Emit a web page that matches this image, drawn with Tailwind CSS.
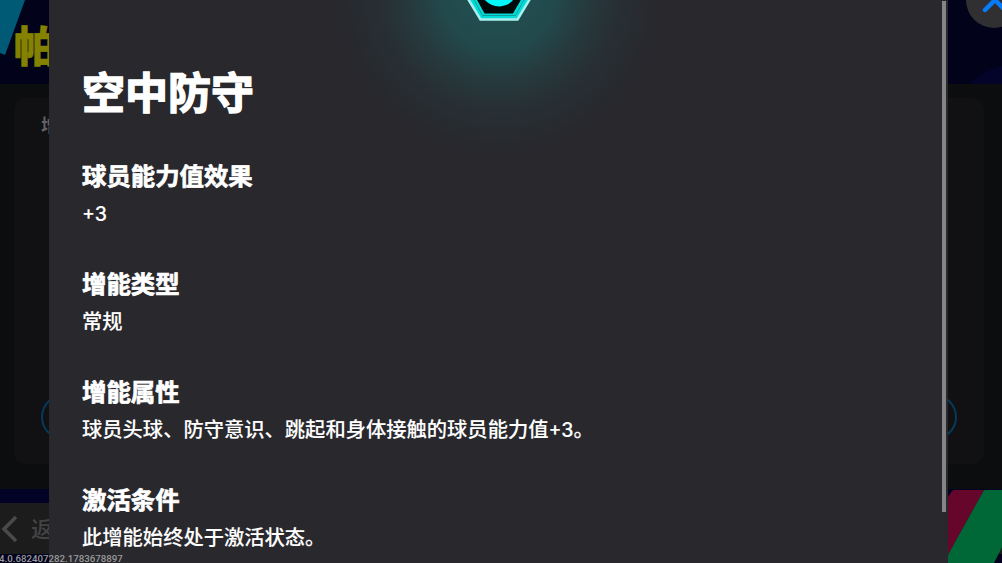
<!DOCTYPE html>
<html lang="zh-CN">
<head>
    <meta charset="UTF-8">
    <meta name="viewport" content="width=device-width, initial-scale=1.0">
    <title>空中防守</title>
    <script src="https://cdn.jsdelivr.net/npm/@tailwindcss/browser@4"></script>
</head>
<body class="relative w-[1002px] h-[563px] overflow-hidden bg-[#02021e] font-['Noto_Sans_CJK_SC',sans-serif] text-white">

    <!-- dimmed page -->
    <div class="flex flex-col h-full whitespace-nowrap">
        <header class="relative h-[84px] shrink-0 bg-[#02021b] overflow-hidden">
            <svg class="absolute inset-0" width="1002" height="84" viewBox="0 0 1002 84">
                <path d="M0 0H25L5 55L0 53Z" fill="#005a75"/>
                <path d="M970 84Q985 70 1002 66V84Z" fill="#04042a"/>
            </svg>
            <h1 class="relative pl-[14px] pt-[19px] text-[42px] leading-[50px] font-black text-[#858200] [-webkit-text-stroke:0.6px_#858200]">帕</h1>
        </header>
        <main class="h-[405px] shrink-0 bg-[#0c0d0f] px-[14px] pt-[14px]">
            <div class="flex flex-col justify-between w-[970px] h-[366px] rounded-[12px] bg-[#111113] px-[27px] pt-[14px] pb-[24px]">
                <div class="text-[18px] leading-[24px] font-bold text-[#626264]">增</div>
                <div class="h-[46px] w-[916px] rounded-full border-2 border-[#063a5c]"></div>
            </div>
        </main>
        <div class="h-[14px] shrink-0 bg-[#020226]"></div>
        <footer class="flex items-center h-[51px] shrink-0 bg-[#1c1c1d] text-[#434344]">
            <svg class="ml-[1px] mr-[12px] shrink-0" width="18" height="30" viewBox="0 0 18 30" fill="none" stroke="#4a4a4b" stroke-width="3.500">
                <path d="M15 3L3 15L15 27"/>
            </svg>
            <span class="relative top-[-2px] text-[22px] leading-[30px] font-medium">返</span>
        </footer>
    </div>
    <svg class="absolute left-[948px] top-[489px]" width="54" height="74" viewBox="0 0 54 74">
        <path d="M5 1H36L0 66V8Z" fill="#66062b"/>
        <path d="M36 1H54V58L46 74H0V66Z" fill="#006837"/>
    </svg>

    <!-- close button -->
    <svg class="absolute left-[966px] top-0" width="36" height="30" viewBox="0 0 36 30">
        <circle cx="28" cy="0" r="28" fill="#303033"/>
        <path d="M19 10L29 0L39 10" fill="none" stroke="#087cf8" stroke-width="4.500" stroke-linecap="round"/>
    </svg>

    <!-- booster detail panel -->
    <section class="absolute left-[49px] top-0 w-[899px] h-[563px] overflow-hidden bg-[#29282d] pl-[33px] pt-[58px] whitespace-nowrap">
        <div class="absolute left-0 top-0 w-full h-[180px] bg-[radial-gradient(circle_175px_at_450px_-8px,#225354_0%,#22494c_33%,#263a3e_50%,#273035_66%,#28292e_88%,#29282d_100%)]"></div>
        <svg class="absolute left-[415px] top-0" width="70" height="22" viewBox="0 0 70 22">
            <path d="M3.500 -2L16.500 19.500H53.500L66.500 -2" fill="#00dcd8" stroke="#a9eff0" stroke-width="2.500"/>
            <path d="M9 -2L18.500 15.500H51.500L61 -2" fill="none" stroke="#129c9c" stroke-width="1"/>
            <path d="M12 -2L20.500 13.500H49L58 -2Z" fill="#000909"/>
            <circle cx="35" cy="-12" r="18.500" fill="#00f8f8"/>
        </svg>
        <h2 class="relative mb-[34px] text-[43px] leading-[64px] font-bold [-webkit-text-stroke:1.4px_white]">空中防守</h2>
        <div class="relative flex flex-col gap-[34px] text-[20.3px] leading-[37px] font-medium [-webkit-text-stroke:0.1px_white]">
            <div>
                <h3 class="h-[38px] text-[24.4px] font-bold [-webkit-text-stroke:0.7px_white]">球员能力值效果</h3>
                <p class="h-[36px]"><span class="font-[Inter] leading-none text-[19.5px]">+3</span></p>
            </div>
            <div>
                <h3 class="h-[38px] text-[24.4px] font-bold [-webkit-text-stroke:0.7px_white]">增能类型</h3>
                <p class="h-[36px]">常规</p>
            </div>
            <div>
                <h3 class="h-[38px] text-[24.4px] font-bold [-webkit-text-stroke:0.7px_white]">增能属性</h3>
                <p class="h-[36px]">球员头球、防守意识、跳起和身体接触的球员能力值<span class="font-[Inter] leading-none text-[19.5px]">+3</span>。</p>
            </div>
            <div>
                <h3 class="h-[38px] text-[24.4px] font-bold [-webkit-text-stroke:0.7px_white]">激活条件</h3>
                <p class="h-[36px]">此增能始终处于激活状态。</p>
            </div>
        </div>
        <div class="absolute left-[893px] top-px w-[4px] h-[511px] bg-[#858588]"></div>
    </section>

    <div class="absolute left-[-1px] top-[553px] font-[Roboto] text-[9.7px] leading-[12px] font-medium text-[#9a9a9c]">4.0.682407282.1783678897</div>
</body>
</html>
